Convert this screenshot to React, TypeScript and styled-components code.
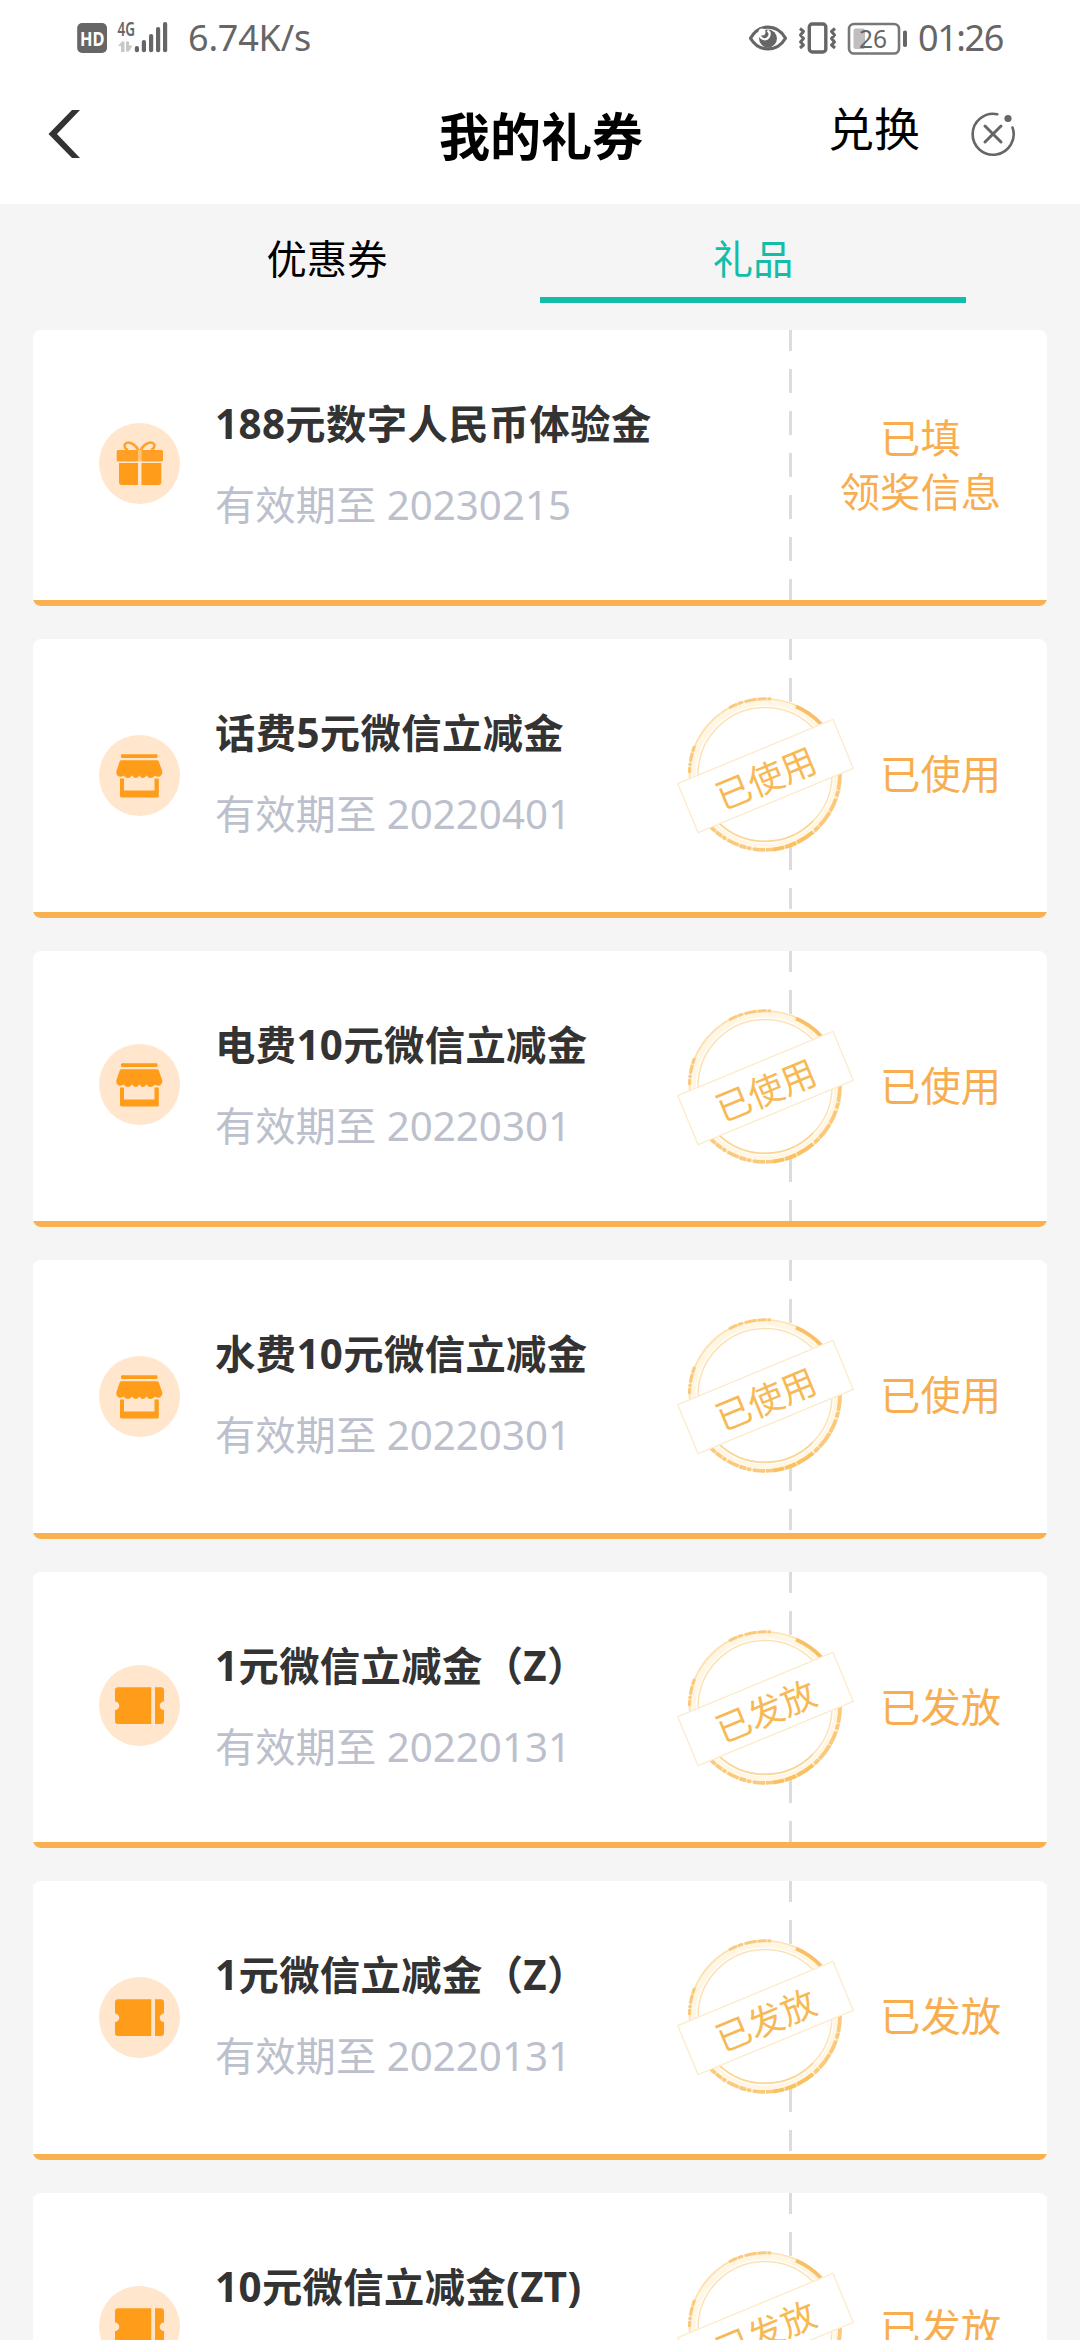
import React from "react";
import styled, { createGlobalStyle } from "styled-components";

const GlobalStyle = createGlobalStyle`
  * { box-sizing: border-box; }
  html, body { margin: 0; padding: 0; background: #f5f5f5; }
  body {
    font-family: "Noto Sans", "Noto Sans CJK SC", sans-serif;
    overflow: hidden;
  }
`;

const Screen = styled.div`
  width: 1080px;
  height: 2340px;
  overflow: hidden;
  background: #f5f5f5;
`;

const Top = styled.header`
  height: 204px;
  background: #fff;
`;

const StatusBar = styled.div`
  height: 75px;
  padding: 0 77px;
  display: flex;
  justify-content: space-between;
  align-items: center;
  color: #666;
`;

const StatusGroup = styled.div`
  display: flex;
  align-items: center;
`;

const StatusText = styled.span<{ $gap: number; $spacing: number }>`
  margin-left: ${(p) => p.$gap}px;
  font-family: "Noto Sans", sans-serif;
  font-size: 36px;
  line-height: 50px;
  letter-spacing: ${(p) => p.$spacing}px;
`;

const StatusIcons = styled.svg`
  display: block;
  overflow: visible;
  font-family: "Noto Sans", sans-serif;
`;

const NavBar = styled.div`
  height: 129px;
  display: grid;
  grid-template-columns: 415px 252px 1fr;
  padding-bottom: 11px;
  align-items: center;
`;

const BackButton = styled.button`
  justify-self: start;
  margin-left: 48px;
  padding: 0;
  border: 0;
  background: none;
  svg { display: block; }
`;

const PageTitle = styled.h1`
  margin: 4px 0 0;
  font-size: 51px;
  line-height: 70px;
  font-weight: 700;
  text-align: center;
  color: #000;
`;

const NavActions = styled.div`
  display: flex;
  align-items: center;
  padding-left: 161px;
`;

const Exchange = styled.span`
  font-size: 46px;
  line-height: 60px;
  margin-top: -12px;
  color: #000;
`;

const CloseIcon = styled.svg`
  display: block;
  margin-left: 50px;
`;

const Tabs = styled.nav`
  display: flex;
  height: 99px;
  padding: 0 114px;
`;

const Tab = styled.div<{ $active?: boolean }>`
  flex: 1;
  border-bottom: 6px solid ${(p) => (p.$active ? "#14bda7" : "transparent")};
  color: ${(p) => (p.$active ? "#14bda7" : "#000")};
  font-size: 40.3px;
  line-height: 109px;
  text-align: center;
`;

const List = styled.main`
  display: flex;
  flex-direction: column;
  gap: 33px;
  padding: 27px 33px 0;
`;

const Card = styled.section<{ $tall: boolean }>`
  position: relative;
  flex: none;
  display: flex;
  flex-direction: column;
  height: ${(p) => (p.$tall ? 279 : 276)}px;
  border-radius: 8px;
  overflow: hidden;
  background: #fff;
`;

const CardBody = styled.div`
  flex: 1;
  display: flex;
`;

const CardStripe = styled.div`
  height: 6px;
  background: #f9b04f;
`;

const CardMain = styled.div`
  width: 756px;
  display: flex;
  padding-left: 66px;
`;

const IconBadge = styled.svg<{ $top: number }>`
  flex: none;
  width: 81px;
  height: 81px;
  margin-top: ${(p) => p.$top}px;
`;

const Info = styled.div`
  margin: 67px 0 0 35px;
`;

const GiftName = styled.h2`
  margin: 0 0 27px;
  font-size: 40.3px;
  line-height: 54px;
  font-weight: 700;
  letter-spacing: 0.4px;
  color: #333;
  white-space: nowrap;
`;

const Expiry = styled.p`
  margin: 0;
  font-size: 40.3px;
  line-height: 54px;
  color: #bcc0cc;
  white-space: nowrap;
`;

const Divider = styled.div`
  width: 3px;
  height: 270px;
  background: repeating-linear-gradient(#dcdcdc 0 24px, transparent 24px 42px) 0 -3px / 3px 300px;
`;

const Status = styled.div<{ $tall: boolean }>`
  flex: 1;
  display: flex;
  align-items: center;
  justify-content: flex-end;
  padding: 0 46px ${(p) => (p.$tall ? 3 : 0)}px 0;
  font-size: 40.3px;
  line-height: 54px;
  color: #f8ae50;
  text-align: center;
  white-space: pre-line;
`;

const StampArt = styled.svg`
  position: absolute;
  left: 642px;
  top: 46px;
  font-family: "Noto Sans CJK SC", sans-serif;
`;

type IconKind = "gift" | "store" | "ticket";

const GiftGlyph = () => (
  <g>
    <path d="M39.5 27.500C36 20 28 17.500 25.800 21.500 24.800 24 26.500 26 29 27M41.500 27.500C45 20 53 17.500 55.200 21.500 56.200 24 54.500 26 52 27" fill="none" stroke="#ffa22d" strokeWidth="2.600" />
    <rect x="17.700" y="27" width="21.300" height="11.500" rx="1.500" fill="#ff9f26" />
    <rect x="42.200" y="27" width="21.800" height="11.500" rx="1.500" fill="#ff9f26" />
    <path d="M20 40H39V62H23Q20 62 20 59ZM42.500 40H62.300V59Q62.300 62 59.300 62H42.500Z" fill="#ff9c1a" />
    <path d="M39 27H42.400V38.500H39Z" fill="#ffc47a" />
  </g>
);

const StoreGlyph = () => (
  <g fill="#ff9c1a">
    <rect x="22" y="19.200" width="36.500" height="3.800" rx="1.200" />
    <path d="M22 25.300H58.500Q59.500 25.300 60 27L63.300 36.500C63.500 41 59.500 43.500 56 40.500 53.500 44 49 43.500 47.500 40.300 45.500 44 42 43.500 40.300 40.300 38.500 44 35 43.500 33 40.300 31.500 43.500 27 44 24.500 40.500 21 43.500 17 41 17.300 36.500L20.500 27Q21 25.300 22 25.300Z" />
    <path d="M21 43.500H25V55.500H55.500V43.500H59.800V61Q59.800 62.600 58 62.600H23Q21 62.600 21 61Z" />
  </g>
);

const TicketGlyph = () => (
  <g fill="#ff9c1a">
    <path d="M19 22.200H52.300V59H19Q16 59 16 56V45A4.300 4.300 0 0 0 16 36.400V25.200Q16 22.200 19 22.200Z" />
    <path d="M56 22.200H62Q65 22.200 65 25.200V36.400A4.300 4.300 0 0 0 65 45V56Q65 59 62 59H56Z" />
  </g>
);

const Badge = ({ kind, top }: { kind: IconKind; top: number }) => (
  <IconBadge $top={top} viewBox="0 0 81 81">
    <circle cx="40.500" cy="40.500" r="40.500" fill="#ffe6cd" />
    {kind === "gift" && <GiftGlyph />}
    {kind === "store" && <StoreGlyph />}
    {kind === "ticket" && <TicketGlyph />}
  </IconBadge>
);

const Stamp = ({ label }: { label: string }) => (
  <StampArt width="180" height="180" viewBox="0 0 180 180">
    <circle cx="90" cy="89.500" r="77" fill="#fff" />
    <circle cx="90" cy="89.500" r="72.500" fill="none" stroke="#fff6e4" strokeWidth="7" />
    <g fill="none" stroke="#fac97c">
      <circle cx="90" cy="89.500" r="75.500" strokeWidth="1.600" stroke="#fce0b0" />
      <path d="M14.500 88A75.500 75.500 0 0 1 20 60" strokeWidth="3.200" strokeDasharray="6 1 3 1.500 9 1" />
      <path d="M24 53A75.500 75.500 0 0 1 52 24" strokeWidth="1.800" stroke="#fce2b4" strokeDasharray="4 2 7 1" />
      <path d="M54 23A75.500 75.500 0 0 1 96 14" strokeWidth="3" strokeDasharray="9 1 5 2 12 1" />
      <path d="M121 21.500A75 75 0 0 1 146 39" strokeWidth="4" stroke="#f9bf66" />
      <path d="M165 88A75.500 75.500 0 0 1 138 147" strokeWidth="3.800" strokeDasharray="17 1 6 2 14 1" />
      <path d="M138 147A75.500 75.500 0 0 1 98 164.500" strokeWidth="4" stroke="#f9c162" strokeDasharray="19 1 12 1" />
      <path d="M98 164.500A75.500 75.500 0 0 1 34 140" strokeWidth="3.600" strokeDasharray="7 1 12 2 4 1" />
      <circle cx="90" cy="89.500" r="67" strokeWidth="1.500" stroke="#fce2b6" />
      <path d="M138 136A67 67 0 0 1 43 137" strokeWidth="1.700" stroke="#fad595" />
    </g>
    <g transform="rotate(-22.500 90.500 91)">
      <rect x="6.500" y="64.500" width="168" height="53" fill="#fff" stroke="#fdebcd" strokeWidth="1.400" />
      <text x="90" y="106.500" textAnchor="middle" fontSize="35" fill="#f7b955">{label}</text>
    </g>
  </StampArt>
);

interface Gift {
  name: string;
  expires: string;
  icon: IconKind;
  status: string;
  stamped: boolean;
}

const gifts: Gift[] = [
  { name: "188元数字人民币体验金", expires: "20230215", icon: "gift", status: "已填\n领奖信息", stamped: false },
  { name: "话费5元微信立减金", expires: "20220401", icon: "store", status: "已使用", stamped: true },
  { name: "电费10元微信立减金", expires: "20220301", icon: "store", status: "已使用", stamped: true },
  { name: "水费10元微信立减金", expires: "20220301", icon: "store", status: "已使用", stamped: true },
  { name: "1元微信立减金（Z）", expires: "20220131", icon: "ticket", status: "已发放", stamped: true },
  { name: "1元微信立减金（Z）", expires: "20220131", icon: "ticket", status: "已发放", stamped: true },
  { name: "10元微信立减金(ZT)", expires: "20220131", icon: "ticket", status: "已发放", stamped: true },
];

const SignalIcons = () => (
  <StatusIcons width="91" height="34" viewBox="77 20 91 34">
    <rect x="77.200" y="22" width="29.800" height="30" rx="5" fill="#666" />
    <text x="80" y="44.800" fontSize="20" fontWeight="700" fill="#fff" textLength="24.500" lengthAdjust="spacingAndGlyphs">HD</text>
    <text x="117.500" y="34.500" fontSize="19" fontWeight="600" fill="#666" textLength="17.500" lengthAdjust="spacingAndGlyphs">4G</text>
    <path d="M118 45L122 40.500H124.500V51H121V45ZM126 40.500H129V44.500H132.500L129 50.500H126Z" fill="#c8c8c8" />
    <g fill="#666">
      <rect x="134.800" y="45" width="4.200" height="6.300" rx="2" />
      <rect x="141.800" y="39" width="4.200" height="12.300" rx="2" />
      <rect x="149" y="33" width="4.200" height="18.300" rx="2" />
      <rect x="156" y="26" width="4.200" height="25.300" rx="2" />
      <rect x="163" y="21" width="4.200" height="30.300" rx="2" />
    </g>
  </StatusIcons>
);

const PowerIcons = () => (
  <StatusIcons width="160" height="36" viewBox="747 18 160 36">
    <path d="M749.500 36.200C758 21.500 776 21.500 784.500 36.200 776 50.500 758 50.500 749.500 36.200Z" fill="none" stroke="#666" strokeWidth="3.200" strokeLinejoin="round" />
    <circle cx="767" cy="36.500" r="9" fill="#666" />
    <path d="M759 31.500A4.800 4.800 0 1 0 766.500 28.500" fill="none" stroke="#fff" strokeWidth="2.200" />
    <circle cx="761" cy="30" r="3.500" fill="#fff" />
    <rect x="808.300" y="22" width="16.500" height="28" rx="3" fill="none" stroke="#666" strokeWidth="3.400" />
    <path d="M799 26.500L802.500 29.500 799.500 33 802.500 36.500 799.500 40 802.500 43 799 46M834 26.500L830.500 29.500 833.500 33 830.500 36.500 833.500 40 830.500 43 834 46" fill="none" stroke="#666" strokeWidth="3" strokeLinejoin="round" />
    <rect x="848" y="22" width="50" height="29.500" rx="5" fill="none" stroke="#777" strokeWidth="2.600" />
    <rect x="852.500" y="26.500" width="11.500" height="20.500" rx="2" fill="#bfbfbf" />
    <text x="858" y="46" fontSize="26" fill="#666" textLength="28" lengthAdjust="spacingAndGlyphs">26</text>
    <rect x="902" y="28.500" width="4" height="16.500" rx="1.800" fill="#666" />
  </StatusIcons>
);

export default function App() {
  return (
    <Screen>
      <GlobalStyle />
      <Top>
        <StatusBar>
          <StatusGroup>
            <SignalIcons />
            <StatusText $gap={20} $spacing={-0.2}>6.74K/s</StatusText>
          </StatusGroup>
          <StatusGroup>
            <PowerIcons />
            <StatusText $gap={10} $spacing={-1.4}>01:26</StatusText>
          </StatusGroup>
        </StatusBar>
        <NavBar>
          <BackButton aria-label="返回">
            <svg width="32" height="48" viewBox="0 0 32 48">
              <path d="M0.500 24L24 0H32L9 24 32 48H24Z" fill="#333" />
            </svg>
          </BackButton>
          <PageTitle>我的礼券</PageTitle>
          <NavActions>
            <Exchange>兑换</Exchange>
            <CloseIcon width="46" height="46" viewBox="0 0 46 46">
              <path d="M27.300 3.200A20.500 20.500 0 1 0 42.500 16.500" fill="none" stroke="#666" strokeWidth="2.600" strokeLinecap="round" />
              <circle cx="38" cy="7.500" r="3.600" fill="#666" />
              <path d="M15 15L31 31M31 15L15 31" stroke="#666" strokeWidth="3" strokeLinecap="round" />
            </CloseIcon>
          </NavActions>
        </NavBar>
      </Top>
      <Tabs>
        <Tab>优惠券</Tab>
        <Tab $active>礼品</Tab>
      </Tabs>
      <List>
        {gifts.map((gift, i) => {
          const tall = i % 2 === 1;
          return (
            <Card key={i} $tall={tall}>
              <CardBody>
                <CardMain>
                  <Badge kind={gift.icon} top={tall ? 96 : 93} />
                  <Info>
                    <GiftName>{gift.name}</GiftName>
                    <Expiry>有效期至 {gift.expires}</Expiry>
                  </Info>
                </CardMain>
                <Divider />
                <Status $tall={tall}>{gift.status}</Status>
              </CardBody>
              <CardStripe />
              {gift.stamped && <Stamp label={gift.status} />}
            </Card>
          );
        })}
      </List>
    </Screen>
  );
}
